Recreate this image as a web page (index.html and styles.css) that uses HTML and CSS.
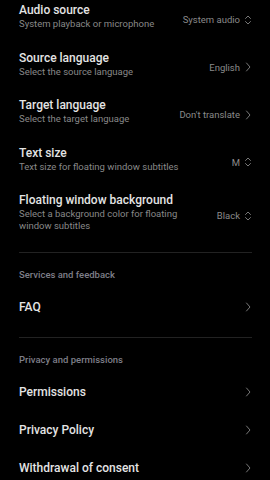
FILE: index.html
```html
<!DOCTYPE html>
<html lang="en">
  <head>
    <meta charset="UTF-8" />
    <meta name="viewport" content="width=device-width, initial-scale=1.0" />
    <title>Subtitles settings</title>
    <link rel="stylesheet" href="styles.css">
  </head>
  <body>
    <div class="settings">
      <div class="row">
        <div class="text">
          <div class="title">Audio source</div>
          <div class="sub">System playback or microphone</div>
        </div>
        <div class="value">System audio</div>
        <svg class="icon" viewBox="0 0 8 12"><path d="M1.5 4.5 L4 2 L6.5 4.5 M1.5 7.5 L4 10 L6.5 7.5" /></svg>
      </div>
      <div class="row">
        <div class="text">
          <div class="title">Source language</div>
          <div class="sub">Select the source language</div>
        </div>
        <div class="value">English</div>
        <svg class="icon" viewBox="0 0 8 12"><path d="M2.5 2 L6 6 L2.5 10" /></svg>
      </div>
      <div class="row">
        <div class="text">
          <div class="title">Target language</div>
          <div class="sub">Select the target language</div>
        </div>
        <div class="value">Don't translate</div>
        <svg class="icon" viewBox="0 0 8 12"><path d="M2.5 2 L6 6 L2.5 10" /></svg>
      </div>
      <div class="row">
        <div class="text">
          <div class="title">Text size</div>
          <div class="sub">Text size for floating window subtitles</div>
        </div>
        <div class="value">M</div>
        <svg class="icon" viewBox="0 0 8 12"><path d="M1.5 4.5 L4 2 L6.5 4.5 M1.5 7.5 L4 10 L6.5 7.5" /></svg>
      </div>
      <div class="row">
        <div class="text">
          <div class="title">Floating window background</div>
          <div class="sub">Select a background color for floating window subtitles</div>
        </div>
        <div class="value">Black</div>
        <svg class="icon" viewBox="0 0 8 12"><path d="M1.5 4.5 L4 2 L6.5 4.5 M1.5 7.5 L4 10 L6.5 7.5" /></svg>
      </div>

      <div class="divider"></div>
      <div class="group">
        <div class="header">Services and feedback</div>
        <div class="link">
          <span>FAQ</span>
          <svg class="icon" viewBox="0 0 8 12"><path d="M2.5 2 L6 6 L2.5 10" /></svg>
        </div>
      </div>

      <div class="divider"></div>
      <div class="group">
        <div class="header">Privacy and permissions</div>
        <div class="link">
          <span>Permissions</span>
          <svg class="icon" viewBox="0 0 8 12"><path d="M2.5 2 L6 6 L2.5 10" /></svg>
        </div>
        <div class="link">
          <span>Privacy Policy</span>
          <svg class="icon" viewBox="0 0 8 12"><path d="M2.5 2 L6 6 L2.5 10" /></svg>
        </div>
        <div class="link">
          <span>Withdrawal of consent</span>
          <svg class="icon" viewBox="0 0 8 12"><path d="M2.5 2 L6 6 L2.5 10" /></svg>
        </div>
      </div>
    </div>
  </body>
</html>
```

FILE: styles.css
```css
* {
  box-sizing: border-box;
  margin: 0;
  padding: 0;
}

body {
  background-color: #000;
  color: #e4e4e4;
  font-family: Roboto, "Noto Sans", sans-serif;
  overflow: hidden;
}

.settings {
  margin-top: -7px;
  padding: 0 18px 0 19px;
}

.row {
  display: flex;
  align-items: center;
  min-height: 47.5px;
  padding: 10px 0;
}
.text {
  flex: 1;
  margin-right: 14px;
}
.title {
  font-size: 12px;
  font-weight: 500;
  line-height: 15px;
}
.sub {
  font-size: 9.5px;
  line-height: 12px;
  color: #888;
}
.value {
  font-size: 9.5px;
  color: #8a8a8a;
  margin-top: 6px;
  white-space: nowrap;
}

.icon {
  width: 8px;
  height: 12px;
  margin-left: 4px;
  flex-shrink: 0;
  fill: none;
  stroke: #777;
  stroke-width: 1;
  stroke-linecap: round;
  stroke-linejoin: round;
}
.row .icon {
  margin-top: 6px;
}

.divider {
  height: 1px;
  background-color: #222;
  margin-top: 10px;
}

.group {
  padding-bottom: 1px;
}
.header {
  font-size: 9.5px;
  font-weight: 500;
  line-height: 12px;
  color: #7e7e88;
  padding: 16px 0 7px;
}
.link {
  display: flex;
  align-items: center;
  justify-content: space-between;
  height: 38px;
  font-size: 12px;
  font-weight: 500;
}
```
